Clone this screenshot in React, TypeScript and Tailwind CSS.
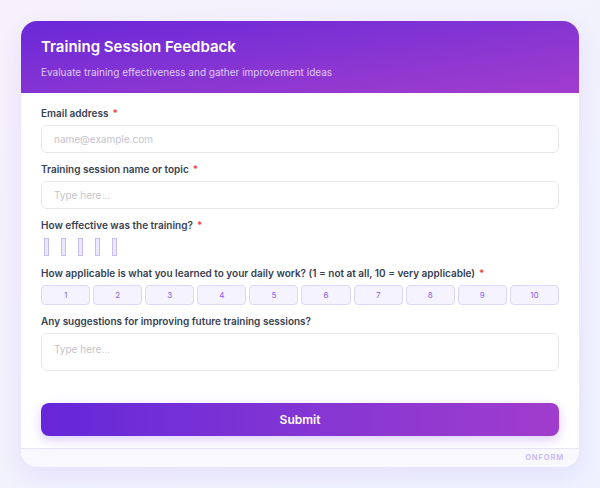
import React from "react";

const Label: React.FC<{ text: string; required?: boolean }> = ({ text, required }) => (
  <label className="block mb-[3px] text-[10px] leading-[17px] font-semibold text-[#374151]">
    {text}
    {required && <span className="ml-1 text-[#ef4444]">*</span>}
  </label>
);

const inputCls =
  "w-full h-[28px] px-3 rounded-md border-[1.5px] border-[#e5e7eb] bg-white text-[10px] text-gray-700 placeholder:text-[#c4c4cc] outline-none";

export default function App() {
  const scale = [1, 2, 3, 4, 5, 6, 7, 8, 9, 10];

  return (
    <div
      className="min-h-[488px] w-full bg-gradient-to-br from-[#f6f1fc] to-[#eef2fe] p-[21px]"
      style={{ fontFamily: "Inter, 'Noto Sans', sans-serif" }}
    >
      <div className="w-[558px] rounded-2xl bg-white overflow-hidden shadow-[0_8px_24px_rgba(124,58,237,0.10)]">
        <div className="h-[72px] px-5 pt-[16px] bg-gradient-to-br from-[#6a26d8] to-[#a13ccd]">
          <h1 className="text-[15px] leading-5 font-semibold text-white">Training Session Feedback</h1>
          <p className="mt-[7px] text-[10px] leading-4 text-white/75">
            Evaluate training effectiveness and gather improvement ideas
          </p>
        </div>

        <div className="px-5 pt-3 pb-3">
          <div className="flex flex-col gap-2">
            <div>
              <Label text="Email address" required />
              <input className={inputCls} placeholder="name@example.com" />
            </div>
            <div>
              <Label text="Training session name or topic" required />
              <input className={inputCls} placeholder="Type here..." />
            </div>
            <div>
              <Label text="How effective was the training?" required />
              <div className="flex items-center gap-3 h-[20px] pl-[3px]">
                {[0, 1, 2, 3, 4].map((i) => (
                  <span
                    key={i}
                    className="w-[5px] h-[18px] border border-[#c7bcf7] bg-[#ede8ff]"
                  />
                ))}
              </div>
            </div>
            <div>
              <Label text="How applicable is what you learned to your daily work? (1 = not at all, 10 = very applicable)" required />
              <div className="grid grid-cols-10 gap-[3px]">
                {scale.map((n) => (
                  <button
                    key={n}
                    className="h-[20px] rounded-[4px] border border-[#ddd6fe] bg-[#f5f3ff] text-[8px] text-[#8b5cf6]"
                  >
                    {n}
                  </button>
                ))}
              </div>
            </div>
            <div>
              <Label text="Any suggestions for improving future training sessions?" />
              <textarea
                className="w-full h-[38px] px-3 pt-[7px] rounded-md border-[1.5px] border-[#e5e7eb] text-[10px] leading-4 placeholder:text-[#c4c4cc] outline-none resize-none block"
                placeholder="Type here..."
              />
            </div>
          </div>

          <button className="mt-[32px] w-full h-[33px] rounded-lg bg-gradient-to-r from-[#6526d9] to-[#a13ccd] text-white text-[12px] font-semibold shadow-[0_4px_12px_rgba(124,58,237,0.25)]">
            Submit
          </button>
        </div>

        <div className="h-[19px] border-t border-[#e9e5f5] bg-[#faf8ff] flex items-center justify-end pr-[15px]">
          <span className="text-[7.5px] font-semibold tracking-[0.12em] text-[#c4b5fd]">ONFORM</span>
        </div>
      </div>
    </div>
  );
}
